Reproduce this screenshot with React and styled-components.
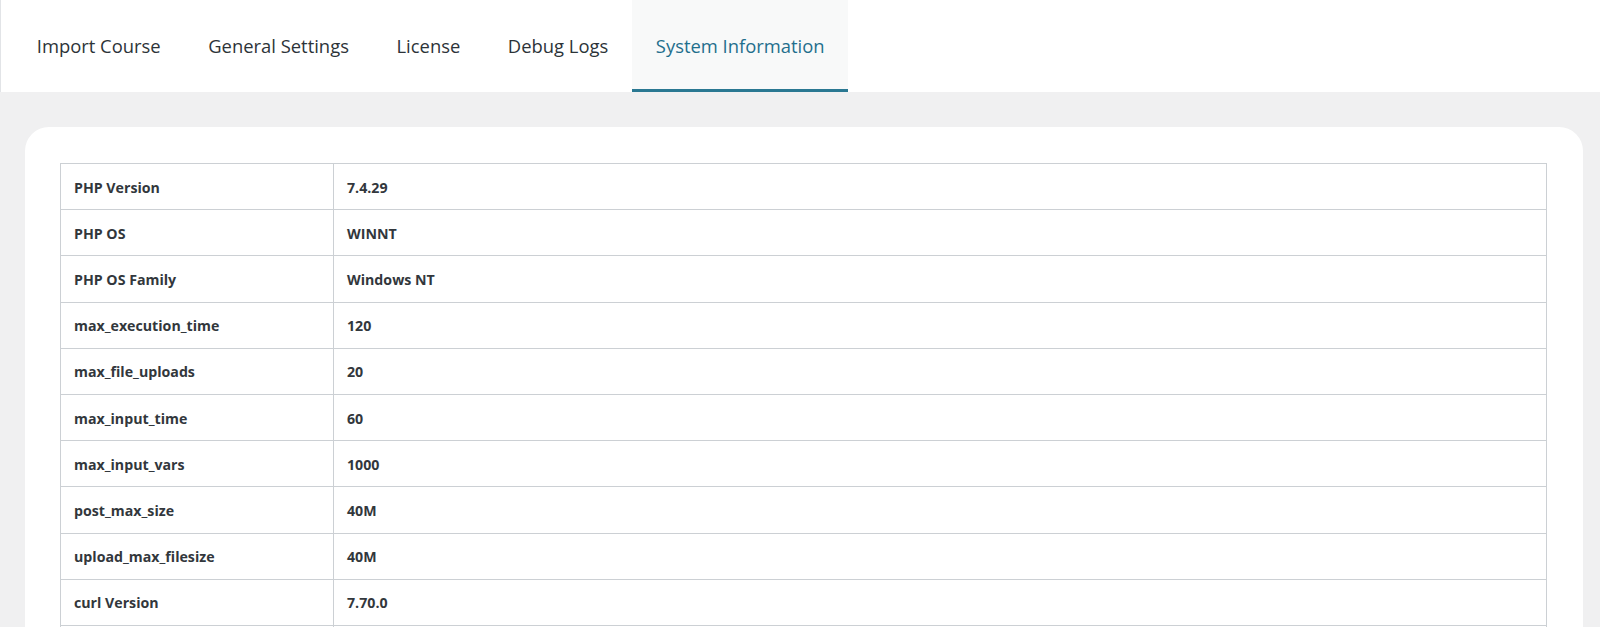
import React from "react";
import styled, { createGlobalStyle } from "styled-components";

const GlobalStyle = createGlobalStyle`
  body {
    margin: 0;
    background: #f0f0f1;
    font-family: "Open Sans", "Liberation Sans", sans-serif;
    color: #2c3338;
  }
`;

const Page = styled.div`
  min-height: 627px;
  background: #f0f0f1;
`;

const TabBar = styled.nav`
  display: flex;
  align-items: stretch;
  height: 92px;
  padding-left: 12px;
  background: #fff;
  border-left: 1px solid #e2e4e7;
  box-sizing: border-box;
`;

const Tab = styled.div`
  display: flex;
  align-items: center;
  padding: 1px 23.8px 0;
  font-size: 18.4px;
  color: ${(p) => (p.$active ? "#1f6f8d" : "#2c3338")};
  background: ${(p) => (p.$active ? "#f8f9f9" : "transparent")};
  border-bottom: 3px solid ${(p) => (p.$active ? "#2a7892" : "transparent")};
  cursor: pointer;
`;

const Body = styled.main`
  padding: 35px 17px 0 25px;
`;

const Card = styled.section`
  background: #fff;
  border-radius: 24px;
  padding: 36px 36px 40px 35px;
`;

const Table = styled.table`
  width: 100%;
  border-collapse: collapse;
  border: 1px solid #ccd0d4;
`;

const Cell = styled.td`
  height: 43.2px;
  padding: 2px 13px 0;
  border: 1px solid #ccd0d4;
  font-size: 14.2px;
  line-height: 18px;
  font-weight: 700;
  color: #32373c;
  width: ${(p) => (p.$label ? "246px" : "auto")};
`;

const tabs = [
  "Import Course",
  "General Settings",
  "License",
  "Debug Logs",
  "System Information",
];

const rows = [
  ["PHP Version", "7.4.29"],
  ["PHP OS", "WINNT"],
  ["PHP OS Family", "Windows NT"],
  ["max_execution_time", "120"],
  ["max_file_uploads", "20"],
  ["max_input_time", "60"],
  ["max_input_vars", "1000"],
  ["post_max_size", "40M"],
  ["upload_max_filesize", "40M"],
  ["curl Version", "7.70.0"],
  ["curl SSL Version", "OpenSSL/1.1.1g"],
];

export default function App() {
  return (
    <Page>
      <GlobalStyle />
      <TabBar>
        {tabs.map((t) => (
          <Tab key={t} $active={t === "System Information"}>
            {t}
          </Tab>
        ))}
      </TabBar>
      <Body>
        <Card>
          <Table>
            <tbody>
              {rows.map(([k, v]) => (
                <tr key={k}>
                  <Cell $label>{k}</Cell>
                  <Cell>{v}</Cell>
                </tr>
              ))}
            </tbody>
          </Table>
        </Card>
      </Body>
    </Page>
  );
}
